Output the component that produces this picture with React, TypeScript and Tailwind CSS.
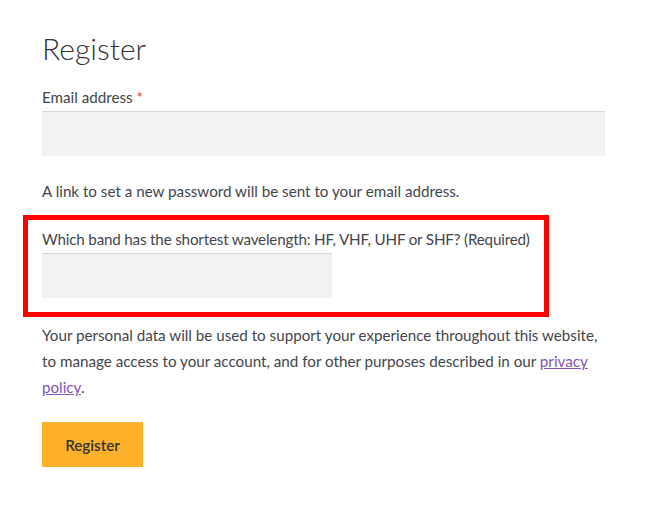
import React from "react";

export default function App() {
  return (
    <div className="w-[661px] h-[515px] bg-white overflow-hidden" style={{ fontFamily: "Lato, 'Liberation Sans', sans-serif" }}>
      <div className="pl-[42px] pt-[28px] w-[605px] text-[#43454b] text-[15.2px] leading-[26px]">
        <h2 className="text-[30px] leading-[40px] font-light text-[#333333]">Register</h2>
        <div className="mt-[16px]">
          Email address <span className="text-[#e2401c]">*</span>
        </div>
        <div className="mt-[1px] h-[45px] w-[563px] bg-[#f2f2f2] shadow-[inset_0_1px_1px_rgba(0,0,0,0.125)]" />
        <p className="mt-[22px]">A link to set a new password will be sent to your email address.</p>
      </div>
      <div className="ml-[23px] mt-[11px] w-[526px] h-[102px] border-[5px] border-[#ff0000] pl-[14px] pt-[6px] text-[#43454b] text-[15.2px] leading-[26px]">
        <div className="whitespace-nowrap tracking-[-0.18px]">Which band has the shortest wavelength: HF, VHF, UHF or SHF? (Required)</div>
        <div className="mt-[1px] h-[45px] w-[290px] bg-[#f2f2f2] shadow-[inset_0_1px_1px_rgba(0,0,0,0.125)]" />
      </div>
      <div className="pl-[42px] mt-[5px] text-[#43454b] text-[15.2px] leading-[26px]">
        <p className="whitespace-nowrap">
          Your personal data will be used to support your experience throughout this website,
          <br />
          to manage access to your account, and for other purposes described in our{" "}
          <a className="text-[#7f54b3] underline" href="#">
            privacy
            <br />
            policy
          </a>
          .
        </p>
        <button className="mt-[22px] w-[101px] h-[45px] bg-[#fdb12a] text-[#333333] font-semibold text-[15.2px]">
          Register
        </button>
      </div>
    </div>
  );
}
